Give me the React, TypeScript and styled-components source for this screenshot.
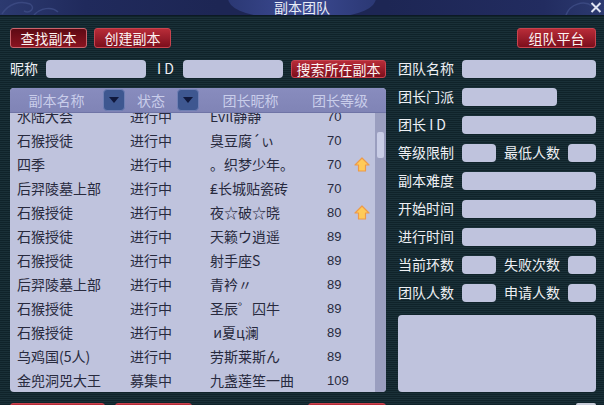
import React from 'react'
import styled, { createGlobalStyle } from 'styled-components'

const GlobalStyle = createGlobalStyle`
html, body {
    margin: 0;
    padding: 0;
    background: #14282f;
}
* {
    box-sizing: border-box;
}
`;

const Window = styled.div`
width: 604px;
height: 405px;
overflow: hidden;
display: flex;
flex-direction: column;
font-family: "Noto Sans CJK SC", "Noto Sans", sans-serif;
font-size: 14px;
color: #eef0f4;
background: repeating-linear-gradient(180deg, #10232a 0 1px, #1a3038 1px 2px);
`;

const TitleBar = styled.div`
position: relative;
height: 16px;
flex: none;
overflow: hidden;
background: linear-gradient(90deg, #2c3a70 0, #202a5c 14%, #1d2654 36%, #1d2654 64%, #222c60 90%, #2c3a70 100%);
border-bottom: 1px solid #0c1a24;
`;

const TitleGlow = styled.div`
position: absolute;
left: 228px;
top: -14px;
width: 148px;
height: 30px;
border-radius: 0 0 40px 40px / 0 0 18px 18px;
background: linear-gradient(90deg, #2b3874, #3c4a92 50%, #2b3874);
`;

const TitleText = styled.div`
position: absolute;
left: 0;
right: 0;
top: 0;
text-align: center;
line-height: 14px;
font-size: 14px;
color: #e8ecf6;
`;

const Swirl = styled.svg`
position: absolute;
left: 0;
top: 0;
`;

const CloseMark = styled.svg`
position: absolute;
right: 2px;
top: 2px;
`;

const Content = styled.div`
flex: 1;
display: flex;
flex-direction: column;
padding: 12px 8px 0 10px;
`;

const TopRow = styled.div`
display: flex;
gap: 7px;
height: 20px;
margin-bottom: 12px;
`;

const RedButton = styled.div<{ $wide?: number; $pushed?: boolean }>`
width: ${p => p.$wide ?? 77}px;
height: 100%;
flex: none;
display: flex;
align-items: center;
justify-content: center;
border-radius: 3px;
border: 1px solid ${p => (p.$pushed ? '#c9646c' : '#c8434e')};
background: ${p => (p.$pushed
    ? 'linear-gradient(180deg, #5e0a14, #8a1420)'
    : 'linear-gradient(180deg, #b82c38, #7c0e1c)')};
color: #fbf2f2;
font-size: 14px;
line-height: 16px;
padding-bottom: 1px;
white-space: nowrap;
`;

const Spacer = styled.div`
flex: 1;
`;

const Columns = styled.div`
display: flex;
gap: 12px;
`;

const LeftColumn = styled.div`
width: 376px;
flex: none;
display: flex;
flex-direction: column;
`;

const RightColumn = styled.div`
flex: 1;
display: flex;
flex-direction: column;
gap: 10px;
`;

const SearchRow = styled.div`
display: flex;
align-items: center;
height: 18px;
margin-bottom: 10px;
`;

const Label = styled.span<{ $w?: number; $left?: number }>`
flex: none;
width: ${p => (p.$w ? `${p.$w}px` : 'auto')};
margin-left: ${p => p.$left ?? 0}px;
line-height: 16px;
height: 18px;
white-space: nowrap;
`;

const Input = styled.div<{ $w?: number }>`
height: 18px;
border-radius: 4px;
background: #bfc3dd;
${p => (p.$w ? `width: ${p.$w}px; flex: none;` : 'flex: 1;')}
`;

const FieldRow = styled.div`
display: flex;
align-items: center;
height: 18px;
`;

const Table = styled.div`
height: 304px;
display: flex;
flex-direction: column;
border-radius: 4px;
overflow: hidden;
background: #bfc3dd;
`;

const HeaderRow = styled.div`
height: 25px;
flex: none;
display: flex;
align-items: center;
background: linear-gradient(180deg, #888cbe, #8084b6);
color: #c9cdea;
border-bottom: 1px solid #6f74a6;
`;

const HeaderCell = styled.div<{ $w: number }>`
width: ${p => p.$w}px;
flex: none;
text-align: center;
line-height: 24px;
`;

const SortButton = styled.div`
width: 22px;
height: 22px;
flex: none;
display: flex;
align-items: center;
justify-content: center;
border-radius: 4px;
border: 1px solid #6f7fb4;
background: #3e5790;
`;

const TableBody = styled.div`
flex: 1;
display: flex;
overflow: hidden;
`;

const Rows = styled.div`
flex: 1;
margin-top: -9px;
`;

const Row = styled.div`
height: 24px;
display: flex;
align-items: center;
color: #282a3e;
white-space: nowrap;
`;

const Cell = styled.div<{ $w: number; $pad?: number }>`
width: ${p => p.$w}px;
flex: none;
padding-left: ${p => p.$pad ?? 0}px;
line-height: 24px;
`;

const LevelCell = styled(Cell)`
font-family: "Liberation Sans", sans-serif;
font-size: 13px;
padding-top: 2px;
`;

const ArrowMark = styled.svg`
margin-top: 2px;
`;

const Scrollbar = styled.div`
width: 11px;
flex: none;
padding: 19px 2px 0;
background: #9a9ebf;
`;

const ScrollThumb = styled.div`
height: 26px;
border-radius: 2px;
background: #c9cde6;
`;

const MemoBox = styled.div`
height: 77px;
margin-top: 3px;
border-radius: 4px;
background: #bfc3dd;
`;

const BottomRow = styled.div`
display: flex;
height: 20px;
margin-top: 11px;
`;

const BottomGap = styled.div<{ $w: number }>`
width: ${p => p.$w}px;
flex: none;
`;

const ResizeBox = styled.div`
width: 20px;
flex: none;
border-radius: 2px 2px 0 0;
background: #c8ccd8;
`;

const rows: [string, string, string, string, boolean][] = [
    ['水陆大会', '进行中', 'Evil静静', '70', false],
    ['石猴授徒', '进行中', '臭豆腐´ぃ', '70', false],
    ['四季', '进行中', '。织梦少年。', '70', true],
    ['后羿陵墓上部', '进行中', '₤长城贴瓷砖', '70', false],
    ['石猴授徒', '进行中', '夜☆破☆晓', '80', true],
    ['石猴授徒', '进行中', '天籁ウ逍遥', '89', false],
    ['石猴授徒', '进行中', '射手座S', '89', false],
    ['后羿陵墓上部', '进行中', '青衿〃', '89', false],
    ['石猴授徒', '进行中', '圣辰゜囚牛', '89', false],
    ['石猴授徒', '进行中', '\u00a0и夏ц澜', '89', false],
    ['乌鸡国(5人)', '进行中', '劳斯莱斯ん', '89', false],
    ['金兜洞兕大王', '募集中', '九盏莲笙一曲', '109', false],
]

const SortIcon = () => (
    <svg width="12" height="8" viewBox="0 0 12 8">
        <path d="M1 1 H11 L6 7 Z" fill="#10183c" />
    </svg>
)

const ArrowIcon = () => (
    <ArrowMark width="16" height="16" viewBox="0 0 16 16">
        <path d="M8 1 L15 8 H11.5 V14 H4.5 V8 H1 Z" fill="#ffcb58" stroke="#ee9a48" strokeWidth="1.2" strokeLinejoin="round" />
    </ArrowMark>
)

const SwirlIcon = () => (
    <Swirl width="604" height="16" viewBox="0 0 604 16" fill="none" stroke="#3a4880" strokeWidth="1.5">
        <path d="M2 14 C8 4 20 0 30 4 C36 8 30 14 24 11" />
        <path d="M34 15 C40 8 52 6 58 12" />
        <path d="M566 15 C570 4 584 0 592 6" />
    </Swirl>
)

const CloseIcon = () => (
    <CloseMark width="12" height="11" viewBox="0 0 12 11">
        <path d="M1.5 1 L10.5 10 M10.5 1 L1.5 10" stroke="#dfe3f2" strokeWidth="2" />
    </CloseMark>
)

const pairs: [string, string][] = [
    ['当前环数', '失败次数'],
    ['团队人数', '申请人数'],
]

const PairRow = ({ first, second }: { first: string; second: string }) => (
    <FieldRow>
        <Label $w={64}>{first}</Label>
        <Input $w={34} />
        <Label $w={64} $left={8}>{second}</Label>
        <Spacer />
        <Input $w={28} />
    </FieldRow>
)

const WideRow = ({ label, w }: { label: string; w?: number }) => (
    <FieldRow>
        <Label $w={64}>{label}</Label>
        <Input $w={w} />
    </FieldRow>
)

export default function App() {
    return (
        <Window>
            <GlobalStyle />
            <TitleBar>
                <SwirlIcon />
                <TitleGlow />
                <TitleText>副本团队</TitleText>
                <CloseIcon />
            </TitleBar>
            <Content>
                <TopRow>
                    <RedButton $pushed>查找副本</RedButton>
                    <RedButton>创建副本</RedButton>
                    <Spacer />
                    <RedButton $wide={79}>组队平台</RedButton>
                </TopRow>
                <Columns>
                    <LeftColumn>
                        <SearchRow>
                            <Label $w={36}>昵称</Label>
                            <Input $w={100} />
                            <Label $w={26} $left={11}>I D</Label>
                            <Input $w={100} />
                            <Spacer />
                            <RedButton $wide={95}>搜索所在副本</RedButton>
                        </SearchRow>
                        <Table>
                            <HeaderRow>
                                <HeaderCell $w={93}>副本名称</HeaderCell>
                                <SortButton><SortIcon /></SortButton>
                                <HeaderCell $w={52}>状态</HeaderCell>
                                <SortButton><SortIcon /></SortButton>
                                <HeaderCell $w={103}>团长昵称</HeaderCell>
                                <HeaderCell $w={76}>团长等级</HeaderCell>
                            </HeaderRow>
                            <TableBody>
                                <Rows>
                                    {rows.map((r, i) => (
                                        <Row key={i}>
                                            <Cell $w={120} $pad={7}>{r[0]}</Cell>
                                            <Cell $w={80}>{r[1]}</Cell>
                                            <Cell $w={117}>{r[2]}</Cell>
                                            <LevelCell $w={27}>{r[3]}</LevelCell>
                                            {r[4] && <ArrowIcon />}
                                        </Row>
                                    ))}
                                </Rows>
                                <Scrollbar><ScrollThumb /></Scrollbar>
                            </TableBody>
                        </Table>
                    </LeftColumn>
                    <RightColumn>
                        <WideRow label="团队名称" />
                        <WideRow label="团长门派" w={95} />
                        <WideRow label="团长 I D" />
                        <PairRow first="等级限制" second="最低人数" />
                        <WideRow label="副本难度" />
                        <WideRow label="开始时间" />
                        <WideRow label="进行时间" />
                        {pairs.map(([first, second]) => (
                            <PairRow key={first} first={first} second={second} />
                        ))}
                        <MemoBox />
                    </RightColumn>
                </Columns>
                <BottomRow>
                    <RedButton $wide={95} />
                    <BottomGap $w={10} />
                    <RedButton $wide={77} />
                    <BottomGap $w={116} />
                    <RedButton $wide={78} />
                    <Spacer />
                    <ResizeBox />
                </BottomRow>
            </Content>
        </Window>
    )
}
